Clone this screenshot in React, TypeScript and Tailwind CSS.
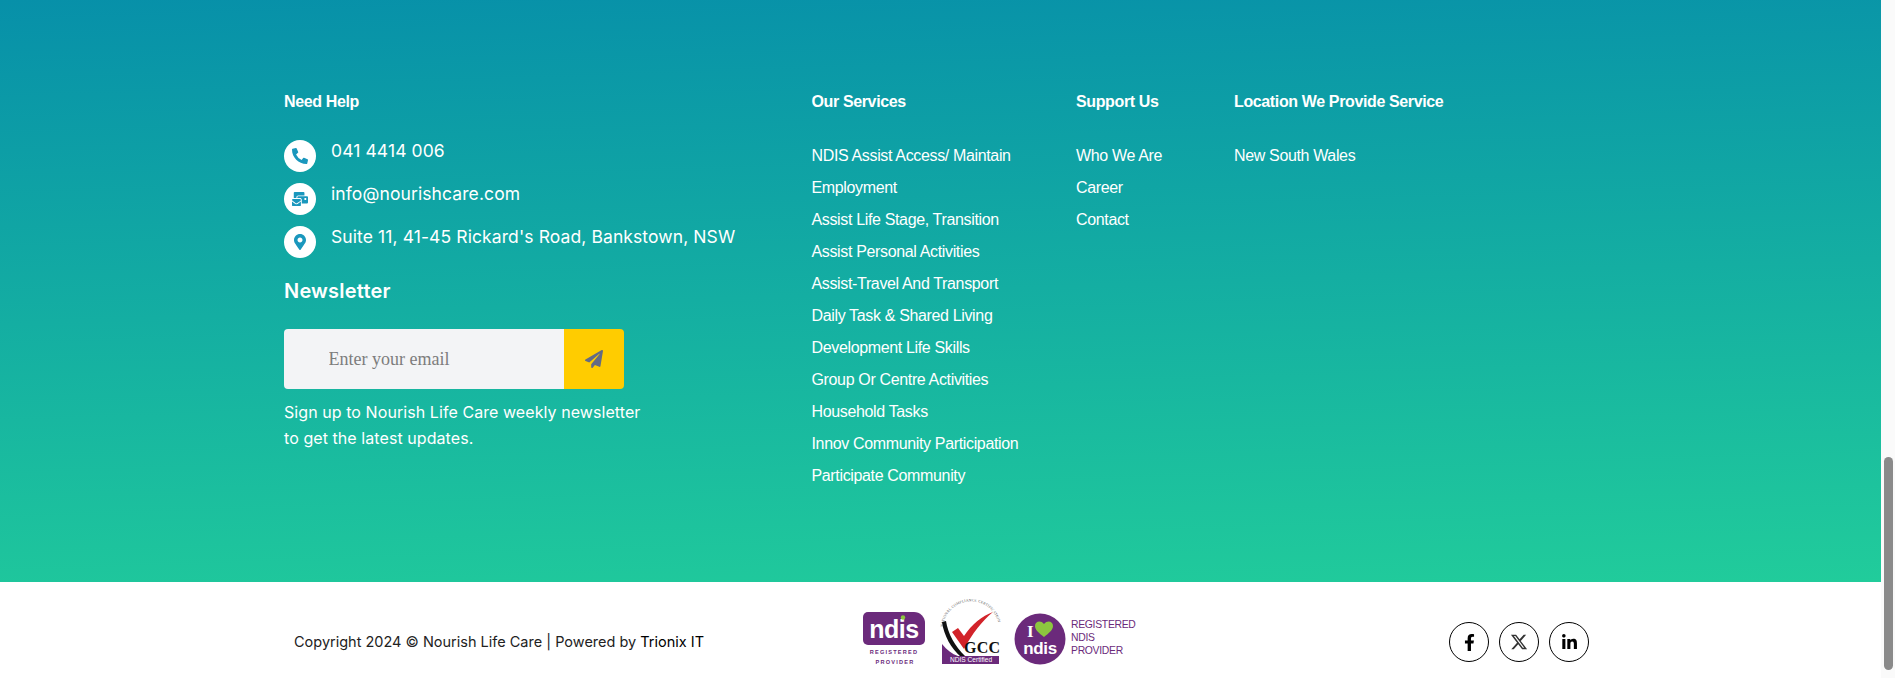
import { FaFacebookF, FaLinkedinIn, FaMailBulk, FaMapMarkerAlt, FaPaperPlane, FaPhoneAlt } from "react-icons/fa";
import { FaXTwitter } from "react-icons/fa6";

const services = [
  "NDIS Assist Access/ Maintain",
  "Employment",
  "Assist Life Stage, Transition",
  "Assist Personal Activities",
  "Assist-Travel And Transport",
  "Daily Task & Shared Living",
  "Development Life Skills",
  "Group Or Centre Activities",
  "Household Tasks",
  "Innov Community Participation",
  "Participate Community",
];

const support = ["Who We Are", "Career", "Contact"];

const contacts = [
  { icon: <FaPhoneAlt />, text: "041 4414 006" },
  { icon: <FaMailBulk />, text: "info@nourishcare.com" },
  { icon: <FaMapMarkerAlt />, text: "Suite 11, 41-45 Rickard's Road, Bankstown, NSW" },
];

const LinkColumn = ({ title, items, className }: { title: string; items: string[]; className: string }) => (
  <div className={className}>
    <h4 className="text-[16px] leading-[20px] font-bold tracking-[-0.37px] text-white">{title}</h4>
    <ul className="mt-[28px]">
      {items.map((item) => (
        <li key={item} className="h-[32px] text-[16px] leading-[32px] tracking-[-0.35px] whitespace-nowrap text-white">
          {item}
        </li>
      ))}
    </ul>
  </div>
);

const NdisLogo = () => (
  <svg width="66" height="56" viewBox="0 -1 66 56">
    <path d="M6 1h46a11 11 0 0 1 11 11v17a5 5 0 0 1-5 5H6a5 5 0 0 1-5-5V6a5 5 0 0 1 5-5z" fill="#6b2a7b" />
    <text x="32" y="27" textAnchor="middle" fill="#fff" fontFamily="Liberation Sans" fontWeight="700" fontSize="25" letterSpacing="-0.5">
      ndis
    </text>
    <circle cx="41" cy="6.5" r="2.2" fill="#8cc63f" />
    <text x="32" y="43" textAnchor="middle" fill="#6b2a7b" fontFamily="Liberation Sans" fontWeight="700" fontSize="5.6" letterSpacing="1.2">
      REGISTERED
    </text>
    <text x="33" y="53" textAnchor="middle" fill="#6b2a7b" fontFamily="Liberation Sans" fontWeight="700" fontSize="5.6" letterSpacing="1.2">
      PROVIDER
    </text>
  </svg>
);

const GccLogo = () => (
  <svg width="62" height="72" viewBox="0 0 62 72">
    <path id="gcc-arc" d="M3 33A28 28 0 1 1 59 38" fill="none" />
    <text fill="#555" fontFamily="Liberation Serif" fontSize="3.7" letterSpacing="0.2">
      <textPath href="#gcc-arc">NATIONAL COMPLIANCE CERTIFICATION</textPath>
    </text>
    <path d="M2 28C4 42 11 54 21 63L25 62C15 52 8 40 6 27z" fill="#111" />
    <path d="M2 50C7 56 12 60 18 62H59V70H2z" fill="#6b2a7b" />
    <path d="M12 38L18 34 24 42C32 30 42 22 53 18 42 27 32 40 24 55z" fill="#d2232a" />
    <text x="24" y="59" fill="#111" fontFamily="Liberation Serif" fontWeight="700" fontSize="16" letterSpacing="0.2">
      GCC
    </text>
    <text x="31" y="68.3" textAnchor="middle" fill="#fff" fontFamily="Liberation Sans" fontSize="6.6">
      NDIS Certified
    </text>
  </svg>
);

const ILoveNdisLogo = () => (
  <svg width="126" height="54" viewBox="0 0 126 54">
    <circle cx="26" cy="27" r="25.5" fill="#6b2a7b" />
    <text x="13" y="25" fill="#fff" fontFamily="Liberation Serif" fontWeight="700" fontSize="17">
      I
    </text>
    <path d="M30 25c-5-4-9-7-9-11 0-5 6-6 9-2 3-4 9-3 9 2 0 4-4 7-9 11z" fill="#8cc63f" />
    <text x="26" y="42" textAnchor="middle" fill="#fff" fontFamily="Liberation Sans" fontWeight="700" fontSize="17" letterSpacing="-0.3">
      ndis
    </text>
    <g fill="#6b2a7b" fontFamily="Liberation Sans" fontSize="10.4" letterSpacing="-0.3">
      <text x="57" y="16">REGISTERED</text>
      <text x="57" y="29">NDIS</text>
      <text x="57" y="42">PROVIDER</text>
    </g>
  </svg>
);

export default function App() {
  return (
    <div className="flex h-screen w-full overflow-hidden bg-white font-['Liberation_Sans',sans-serif]">
      <main className="flex min-w-0 flex-1 flex-col">
        <section className="flex h-[582px] bg-[linear-gradient(178deg,#0790a9_0%,#21cc9b_100%)] pt-[92px] pl-[284px] text-white">
          <div className="w-[527.5px]">
            <h4 className="text-[16px] leading-[20px] font-bold tracking-[-0.37px]">Need Help</h4>
            <ul className="mt-[28px] flex flex-col gap-[11px]">
              {contacts.map((c) => (
                <li key={c.text} className="flex h-[32px] items-start gap-[15px]">
                  <span className="flex h-[32px] w-[32px] items-center justify-center rounded-full bg-white text-[16px] text-[#1a97bd]">
                    {c.icon}
                  </span>
                  <span className="font-['Inter',sans-serif] text-[17.5px] leading-[22px] tracking-[0.1px] whitespace-nowrap text-white">
                    {c.text}
                  </span>
                </li>
              ))}
            </ul>
            <h3 className="mt-[21px] font-['Inter',sans-serif] text-[20px] leading-[24px] font-semibold tracking-[0.2px]">Newsletter</h3>
            <form className="mt-[26px] flex h-[60px] w-[340px] overflow-hidden rounded-[4px]">
              <input
                type="text"
                placeholder="Enter your email"
                className="min-w-0 flex-1 bg-[#f3f4f6] pl-[44.5px] font-['Liberation_Serif',serif] text-[18px] placeholder:text-[#7d7d7d]"
              />
              <button type="button" className="flex w-[60px] items-center justify-center bg-[#ffcc00] text-[18px] text-[#636b85]">
                <FaPaperPlane />
              </button>
            </form>
            <p className="mt-[10px] w-[362px] font-['Inter',sans-serif] text-[16px] leading-[26px] tracking-[0.07px] text-white">
              Sign up to Nourish Life Care weekly newsletter to get the latest updates.
            </p>
          </div>
          <LinkColumn title="Our Services" items={services} className="w-[264.5px]" />
          <LinkColumn title="Support Us" items={support} className="w-[158px]" />
          <LinkColumn title="Location We Provide Service" items={["New South Wales"]} className="w-[300px]" />
        </section>
        <footer className="flex h-[96px] items-center">
          <p className="mt-[24px] ml-[294px] w-[568px] font-['Inter',sans-serif] text-[14.5px] whitespace-nowrap text-[#222]">
            Copyright 2024 © Nourish Life Care | Powered by <span className="text-black">Trionix IT</span>
          </p>
          <div className="flex w-[587px] items-end gap-[12px]">
            <NdisLogo />
            <GccLogo />
            <ILoveNdisLogo />
          </div>
          <div className="mt-[24px] flex gap-[10px] text-[17px] text-black">
            <span className="flex h-[40px] w-[40px] items-center justify-center rounded-full border border-black"><FaFacebookF /></span>
            <span className="flex h-[40px] w-[40px] items-center justify-center rounded-full border border-black"><FaXTwitter className="text-[18px] text-[#333]" /></span>
            <span className="flex h-[40px] w-[40px] items-center justify-center rounded-full border border-black"><FaLinkedinIn /></span>
          </div>
        </footer>
      </main>
      {/* browser scrollbar */}
      <div className="flex w-[14px] flex-col bg-[#fafafa] pt-[457px] pl-[3px]">
        <div className="h-[213px] w-[9px] rounded-full bg-[#8a8a8a]" />
      </div>
    </div>
  );
}
